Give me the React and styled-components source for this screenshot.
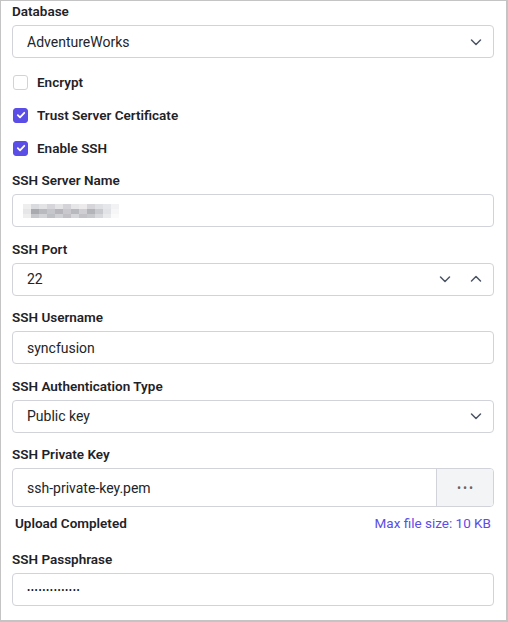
import React from "react";
import styled, { createGlobalStyle } from "styled-components";

const GlobalStyle = createGlobalStyle`
  * { box-sizing: border-box; }
  html, body {
    margin: 0;
    padding: 0;
    background: #ffffff;
  }
  body {
    font-family: Roboto, "Liberation Sans", Arial, sans-serif;
    color: #212529;
  }
`;

// blurred server name, drawn as a little mosaic
const mosaic = [
  ["#eeeeef", "#dadbdf", "#e3e3e6", "#d6d6da", "#e4e4e7", "#d4d3d7", "#e6e6e9", "#eceaea", "#d6d6da", "#dfe0e4", "#e6e7ea", "#f2f2f4"],
  ["#e6e6e9", "#a9aab0", "#b9babf", "#c5c6cb", "#b6b5bb", "#c9c8cd", "#b8b9be", "#cfcfd3", "#b3b4ba", "#c9cacf", "#e2e3e6", "#f6f6f7"],
  ["#eeeeef", "#c6c7cc", "#d2d3d6", "#bfc0c5", "#cfd0d4", "#c1c0c5", "#d4d5d9", "#c3c3c7", "#c7c8cc", "#d7d8dc", "#e9eaec", "#fafafa"],
];

export default function App() {
  return (
    <>
      <GlobalStyle />
      <Panel>
        <Field>
          <Label>Database</Label>
          <Box>
            <Value>AdventureWorks</Value>
            <IconBtn><Chevron /></IconBtn>
          </Box>
        </Field>

        <CheckGroup>
          <CheckRow>
            <CheckBox />
            <CheckText>Encrypt</CheckText>
          </CheckRow>
          <CheckRow>
            <CheckBox checked><Tick /></CheckBox>
            <CheckText>Trust Server Certificate</CheckText>
          </CheckRow>
          <CheckRow>
            <CheckBox checked><Tick /></CheckBox>
            <CheckText>Enable SSH</CheckText>
          </CheckRow>
        </CheckGroup>

        <Field>
          <Label>SSH Server Name</Label>
          <Box>
            <svg width="96" height="14" viewBox="0 0 96 14" style={{ display: "block", marginLeft: -4 }}>
              {mosaic.map((row, r) =>
                row.map((c, i) => (
                  <rect key={r + "-" + i} x={i * 8} y={r * 5} width="8" height="5" fill={c} />
                ))
              )}
            </svg>
          </Box>
        </Field>

        <Field>
          <Label>SSH Port</Label>
          <Box>
            <Value>22</Value>
            <IconBtn><Chevron /></IconBtn>
            <IconBtn><Chevron up /></IconBtn>
          </Box>
        </Field>

        <Field>
          <Label>SSH Username</Label>
          <Box>
            <Value>syncfusion</Value>
          </Box>
        </Field>

        <Field>
          <Label>SSH Authentication Type</Label>
          <Box>
            <Value>Public key</Value>
            <IconBtn><Chevron /></IconBtn>
          </Box>
        </Field>

        <Field>
          <Label>SSH Private Key</Label>
          <FileBox>
            <Value>ssh-private-key.pem</Value>
            <Browse>•••</Browse>
          </FileBox>
          <UploadRow>
            <UploadText>Upload Completed</UploadText>
            <MaxSize>Max file size: 10 KB</MaxSize>
          </UploadRow>
        </Field>

        <Field>
          <Label>SSH Passphrase</Label>
          <Box>
            <Dots>••••••••••••••</Dots>
          </Box>
        </Field>
      </Panel>
    </>
  );
}

function Chevron({ up }) {
  return (
    <svg width="14" height="14" viewBox="0 0 14 14" fill="none">
      <path
        d={up ? "M2.5 9 L7 4.5 L11.5 9" : "M2.5 5 L7 9.5 L11.5 5"}
        stroke="#4b5563"
        strokeWidth="1.5"
        strokeLinecap="round"
        strokeLinejoin="round"
      />
    </svg>
  );
}

function Tick() {
  return (
    <svg width="10" height="10" viewBox="0 0 10 10" fill="none">
      <path d="M1.8 5.2 L4 7.3 L8.3 2.8" stroke="#ffffff" strokeWidth="1.8" strokeLinecap="round" strokeLinejoin="round" />
    </svg>
  );
}

const Panel = styled.div`
  width: 508px;
  height: 622px;
  overflow: hidden;
  border: 1px solid #c4c4c4;
  border-right-width: 2px;
  border-bottom-width: 2px;
  padding: 2px 12px 0 11px;
  display: flex;
  flex-direction: column;
  gap: 13.5px;
`;

const Field = styled.div`
  display: flex;
  flex-direction: column;
`;

const Label = styled.div`
  font-size: 13.5px;
  line-height: 16px;
  font-weight: 600;
  color: #1f2328;
  margin-bottom: 6px;
`;

const Box = styled.div`
  height: 33px;
  border: 1px solid #d2d3da;
  border-radius: 4px;
  background: #ffffff;
  display: flex;
  align-items: center;
  padding: 0 2px 0 14px;
`;

const Value = styled.div`
  flex: 1;
  font-size: 14px;
  color: #212529;
  white-space: nowrap;
`;

const IconBtn = styled.span`
  width: 31px;
  height: 24px;
  display: flex;
  align-items: center;
  justify-content: center;
`;

const CheckGroup = styled.div`
  display: flex;
  flex-direction: column;
  gap: 12px;
`;

const CheckRow = styled.div`
  height: 21px;
  display: flex;
  align-items: center;
  gap: 9px;
  padding-left: 1px;
`;

const CheckBox = styled.span`
  width: 15px;
  height: 15px;
  border-radius: 3px;
  display: flex;
  align-items: center;
  justify-content: center;
  background: ${({ checked }) => (checked ? "#5b4ee6" : "#ffffff")};
  border: 1px solid ${({ checked }) => (checked ? "#5b4ee6" : "#d2d3da")};
`;

const CheckText = styled.span`
  font-size: 13.5px;
  font-weight: 600;
  color: #1f2328;
`;

const FileBox = styled(Box)`
  height: 39px;
  padding-right: 0;
  overflow: hidden;
`;

const Browse = styled.div`
  width: 57px;
  height: 100%;
  background: #f3f4f6;
  border-left: 1px solid #d2d3da;
  display: flex;
  align-items: center;
  justify-content: center;
  font-size: 12px;
  letter-spacing: 2px;
  padding-left: 2px;
  color: #5f6670;
`;

const UploadRow = styled.div`
  display: flex;
  justify-content: space-between;
  align-items: center;
  height: 18px;
  margin: 7px 0 5.5px;
  padding: 0 3px 0 3px;
`;

const UploadText = styled.span`
  font-size: 13.5px;
  font-weight: 600;
  color: #1f2328;
`;

const MaxSize = styled.span`
  font-size: 13.5px;
  color: #5b4ee6;
`;

const Dots = styled.span`
  font-size: 9.5px;
  letter-spacing: 0.6px;
  color: #0d1117;
`;
